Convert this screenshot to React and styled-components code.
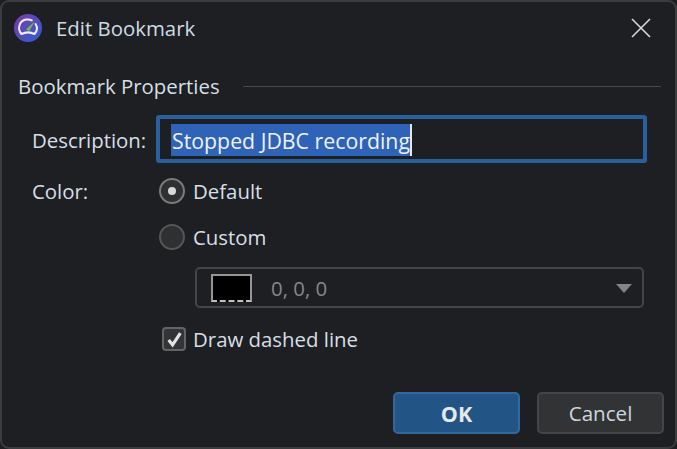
import React from 'react';
import styled, { createGlobalStyle } from 'styled-components';

const GlobalStyle = createGlobalStyle`
  html, body { margin: 0; padding: 0; background: #1e1f22; }
  body { font-family: "Open Sans", "Noto Sans", sans-serif; }
`;

const Dialog = styled.div`
  width: 677px;
  height: 449px;
  box-sizing: border-box;
  background: #1e1f22;
  border: 2px solid #3b3c3e;
  border-radius: 9px;
  display: flex;
  flex-direction: column;
  color: #d6dfe6;
  font-size: 20.4px;
  overflow: hidden;
`;

const TitleBar = styled.div`
  height: 52px;
  flex: none;
  display: flex;
  align-items: center;
  padding: 0 24px 0 12px;
`;

const AppIcon = styled.svg`
  width: 28px;
  height: 28px;
  flex: none;
  margin-right: 14px;
`;

const Title = styled.div`
  flex: 1;
  color: #cfdbe4;
`;

const CloseIcon = styled.svg`
  width: 20px;
  height: 20px;
  display: block;
`;

const Section = styled.div`
  display: flex;
  align-items: center;
  gap: 23px;
  margin: 18px 14px 0 16px;
  height: 28px;
`;

const SectionLine = styled.div`
  flex: 1;
  height: 1px;
  background: #48494b;
`;

const Form = styled.div`
  display: grid;
  grid-template-columns: 124px 491px;
  padding: 15px 0 0 30px;
  align-items: start;
`;

const Label = styled.div`
  height: ${p => p.$h || 48}px;
  line-height: ${p => p.$lh || p.$h || 48}px;
  margin-top: ${p => p.$mt || 0}px;
`;

const InputBox = styled.div`
  height: 48px;
  box-sizing: border-box;
  border: 4px solid #285f9c;
  border-radius: 3px;
  background: #1e1f22;
  padding: 5px 0 0 11px;
`;

const Selected = styled.span`
  display: inline-block;
  height: 32px;
  line-height: 33px;
  font-size: 21.3px;
  background: #2f63b8;
  color: #eef2f6;
  padding-left: 1px;
  border-right: 2px solid #e6e6e6;
`;

const Options = styled.div`
  display: flex;
  flex-direction: column;
  margin-top: 15px;
  margin-left: 3px;
`;

const OptionRow = styled.div`
  display: flex;
  align-items: center;
  height: 26px;
  margin-bottom: ${p => p.$mb || 0}px;
`;

const Radio = styled.div`
  width: 26px;
  height: 26px;
  box-sizing: border-box;
  border-radius: 50%;
  border: 2px solid ${p => (p.$on ? '#7a7b7d' : '#555658')};
  background: #2f3032;
  display: flex;
  align-items: center;
  justify-content: center;
  margin-right: 8px;
  &::after {
    content: '';
    display: ${p => (p.$on ? 'block' : 'none')};
    width: 8px;
    height: 8px;
    border-radius: 50%;
    background: #d8d8d8;
  }
`;

const ColorSelect = styled.div`
  width: 449px;
  height: 41px;
  box-sizing: border-box;
  margin: 0 0 18px 36px;
  border: 2px solid #444547;
  border-radius: 5px;
  display: flex;
  align-items: center;
  padding: 0 10px 0 14px;
  color: #85878a;
`;

const Swatch = styled.div`
  width: 41px;
  height: 28px;
  box-sizing: border-box;
  background: #000;
  border: 2px solid #969696;
  border-bottom: 2px dashed #c0c0c0;
  margin-right: 19px;
`;

const SelectValue = styled.div`
  flex: 1;
`;

const Arrow = styled.div`
  width: 0;
  height: 0;
  border-left: 8px solid transparent;
  border-right: 8px solid transparent;
  border-top: 9px solid #858585;
  margin-top: 1px;
`;

const Checkbox = styled.div`
  width: 24px;
  height: 24px;
  box-sizing: border-box;
  margin-left: 3px;
  margin-right: 7px;
  border: 2px solid #636466;
  border-radius: 4px;
  background: #333436;
  display: flex;
  align-items: center;
  justify-content: center;
`;

const Footer = styled.div`
  display: flex;
  justify-content: flex-end;
  gap: 17px;
  margin-top: auto;
  padding: 0 11px 13px 0;
`;

const Button = styled.div`
  width: 127px;
  height: 42px;
  box-sizing: border-box;
  border-radius: 5px;
  display: flex;
  align-items: center;
  justify-content: center;
  border: 2px solid ${p => (p.$primary ? '#33689b' : '#444547')};
  background: ${p => (p.$primary ? '#225585' : '#323335')};
  color: ${p => (p.$primary ? '#e6e9ec' : '#ccd6de')};
  font-weight: ${p => (p.$primary ? 700 : 400)};
  font-size: ${p => (p.$primary ? 21.5 : 20.6)}px;
`;

export default function App() {
  return (
    <>
      <GlobalStyle />
      <Dialog>
        <TitleBar>
          <AppIcon viewBox="0 0 28 28">
            <defs>
              <linearGradient id="logo" x1="0" y1="0" x2="1" y2="1">
                <stop offset="0" stopColor="#7a3aa8" />
                <stop offset="1" stopColor="#2f5fd0" />
              </linearGradient>
            </defs>
            <circle cx="14" cy="14" r="14" fill="url(#logo)" />
            <path d="M7.5 20 C3 15 5 7 12 5.6 C14 5.2 16 5.5 17.8 6.4 M21.6 10 C23.6 13.5 23 17.5 20.5 20 C16.5 18 11.5 18 7.5 20" fill="none" stroke="#f1ecf8" strokeWidth="2" strokeLinecap="round" strokeLinejoin="round" />
            <path d="M12 15.5 L21 7 L15.2 17 Z" fill="#6fc04a" />
          </AppIcon>
          <Title>Edit Bookmark</Title>
          <CloseIcon viewBox="0 0 20 20">
            <path d="M1 1 L19 19 M19 1 L1 19" stroke="#d8d8d8" strokeWidth="1.6" fill="none" />
          </CloseIcon>
        </TitleBar>
        <Section>
          <span>Bookmark Properties</span>
          <SectionLine />
        </Section>
        <Form>
          <Label $lh={51}>Description:</Label>
          <InputBox>
            <Selected>Stopped JDBC recording</Selected>
          </InputBox>
          <Label $h={26} $mt={15}>Color:</Label>
          <Options>
            <OptionRow $mb={20}>
              <Radio $on />
              Default
            </OptionRow>
            <OptionRow $mb={17}>
              <Radio />
              Custom
            </OptionRow>
            <ColorSelect>
              <Swatch />
              <SelectValue>0, 0, 0</SelectValue>
              <Arrow />
            </ColorSelect>
            <OptionRow>
              <Checkbox>
                <svg width="17" height="17" viewBox="0 0 16 16">
                  <path d="M2.5 8.5 L6.2 13 L13.5 2" fill="none" stroke="#e2e2e2" strokeWidth="3" />
                </svg>
              </Checkbox>
              Draw dashed line
            </OptionRow>
          </Options>
        </Form>
        <Footer>
          <Button $primary>OK</Button>
          <Button>Cancel</Button>
        </Footer>
      </Dialog>
    </>
  );
}
